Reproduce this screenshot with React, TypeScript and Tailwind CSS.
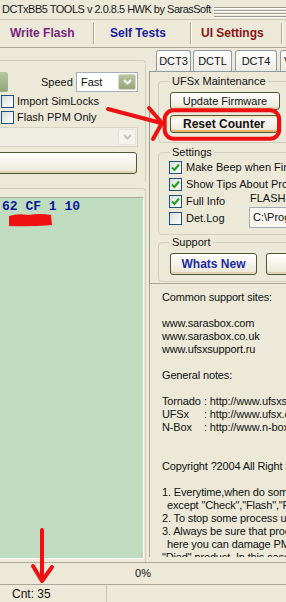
import React from "react";

function Chevron({ color }: { color: string }) {
  return (
    <svg width="9" height="6" viewBox="0 0 9 6">
      <path d="M1 1 L4.5 4.5 L8 1" fill="none" stroke={color} strokeWidth="2" />
    </svg>
  );
}

function DropBtn({ disabled }: { disabled?: boolean }) {
  return (
    <div
      className={
        disabled
          ? "flex h-full w-[18px] shrink-0 items-center justify-center rounded-[2px] border border-[#e6e4da] bg-[#f4f3ee]"
          : "flex h-full w-[18px] shrink-0 items-center justify-center rounded-[2px] border border-[#d2dbc3] bg-gradient-to-b from-[#b9c7a1] to-[#94a677]"
      }
    >
      <Chevron color={disabled ? "#c8c6bb" : "#ffffff"} />
    </div>
  );
}

function Check({ checked }: { checked?: boolean }) {
  return (
    <span className="flex h-[13px] w-[13px] shrink-0 items-center justify-center border border-[#1c5180] bg-gradient-to-br from-[#dcdcd7] to-white">
      {checked && (
        <svg width="9" height="9" viewBox="0 0 9 9">
          <path d="M1 4.5 L3.5 7 L8 1.5" fill="none" stroke="#21a121" strokeWidth="2" />
        </svg>
      )}
    </span>
  );
}

function Sep() {
  return <div className="my-[3px] w-[2px] border-l border-r border-l-[#aca899] border-r-white" />;
}

const btn =
  "flex items-center rounded-[3px] border border-[#4d5b38] bg-gradient-to-b from-white to-[#ebe8d6] shadow-[inset_0_-2px_0_#dcd2b4]";

const memo: React.ReactNode[] = [
  "Common support sites:",
  "",
  "www.sarasbox.com",
  "www.sarasbox.co.uk",
  "www.ufsxsupport.ru",
  "",
  "General notes:",
  "",
  <>
    <span className="inline-block w-[42px]">Tornado</span>: http://www.ufsxsupport.com
  </>,
  <>
    <span className="inline-block w-[42px]">UFSx</span>: http://www.ufsx.com
  </>,
  <>
    <span className="inline-block w-[42px]">N-Box</span>: http://www.n-box.info
  </>,
  "",
  "",
  "Copyright ?2004 All Right Reserved",
  "",
  "1. Everytime,when do some operation,",
  <span className="pl-[5px]">except "Check","Flash","Read"</span>,
  "2. To stop some process use Stop",
  "3. Always be sure that process is done,",
  <span className="pl-[5px]">here you can damage PM</span>,
  "\"Died\" product. In this case",
];

export default function App() {
  return (
    <div className="relative h-[602px] w-[286px] overflow-hidden bg-[#ECE9D8] font-['Liberation_Sans',Arial,sans-serif] text-[11px] leading-[13px] text-[#111]">
      {/* title */}
      <div className="flex h-[20px] items-center border-b border-[#c9c6b4]">
        <span className="shrink-0 whitespace-nowrap pl-[2px] tracking-[-0.5px] text-[#1a1a1a]">
          DCTxBB5 TOOLS v 2.0.8.5 HWK by SarasSoft
        </span>
        <div className="ml-[3px] flex flex-1 flex-col gap-[2px] pt-[4px]">
          <div className="h-px bg-[#9d9a8a] shadow-[0_1px_0_#fff]" />
          <div className="h-px bg-[#9d9a8a] shadow-[0_1px_0_#fff]" />
          <div className="h-px bg-[#9d9a8a] shadow-[0_1px_0_#fff]" />
          <div className="h-px bg-[#9d9a8a] shadow-[0_1px_0_#fff]" />
        </div>
      </div>

      {/* toolbar */}
      <div className="flex h-[28px] items-stretch border-b border-[#aca899] text-[12px] font-bold">
        <div className="flex w-[93px] items-center pl-[10px] text-[#7a1f7f]">Write Flash</div>
        <Sep />
        <div className="flex w-[95px] items-center pl-[15px] text-[#1b1ba0]">Self Tests</div>
        <Sep />
        <div className="flex w-[89px] items-center pl-[9px] text-[#8b1414]">UI Settings</div>
        <Sep />
      </div>

      {/* main */}
      <div className="flex h-[514px]">
        {/* left column */}
        <div className="flex w-[149px] shrink-0 flex-col">
          <div className="mr-[3px] mt-[12px] rounded-tr-[4px] border-r border-t border-[#d0d0bf] pb-[8px] pt-[11px]">
            <div className="flex h-[20px] items-stretch">
              <div className="w-[8px] overflow-hidden rounded-r-[2px] bg-gradient-to-b from-[#b9c7a1] to-[#94a677]" />
              <span className="ml-[33px] w-[32px] self-center">Speed</span>
              <div className="ml-[3px] flex w-[62px] items-stretch border border-[#a5acb5] bg-white p-px">
                <span className="flex-1 self-center pl-[3px]">Fast</span>
                <DropBtn />
              </div>
            </div>
            <div className="mt-px flex h-[16px] items-center gap-[3px] pl-[1px]">
              <Check />
              <span>Import SimLocks</span>
            </div>
            <div className="flex h-[16px] items-center gap-[3px] pl-[1px]">
              <Check />
              <span>Flash PPM Only</span>
            </div>
            <div className="-ml-[4px] mt-[2px] flex h-[20px] w-[142px] justify-end border border-[#d6d3c5] bg-[#efede4] p-px">
              <DropBtn disabled />
            </div>
            <div className={`${btn} -ml-[4px] mt-[5px] h-[22px] w-[141px]`} />
          </div>

          <div className="mr-[3px] mt-[6px] flex flex-1 flex-col rounded-tr-[4px] border-r border-t border-[#d0d0bf] pb-[3px] pt-[8px]">
            <div className="mr-px flex-1 border-b border-r border-t border-b-white border-r-white border-t-[#aca899] bg-[#c0dcc0] pl-[2px] pt-px font-['Liberation_Mono',monospace] text-[13px] font-bold leading-[16px] text-[#0a1aa0]">
              62 CF 1 10
            </div>
          </div>
        </div>

        {/* right column */}
        <div className="flex min-w-0 flex-1 flex-col">
          <div className="mt-[2px] flex h-[21px] items-end pl-[7px]">
            <div className="flex h-[21px] w-[35px] shrink-0 items-center justify-center rounded-t-[3px] border border-b-0 border-[#919b9c] bg-gradient-to-b from-white to-[#ecebe6]">DCT3</div>
            <div className="ml-[2px] flex h-[21px] w-[39px] shrink-0 items-center justify-center rounded-t-[3px] border border-b-0 border-[#919b9c] bg-gradient-to-b from-white to-[#ecebe6]">DCTL</div>
            <div className="ml-[3px] flex h-[21px] w-[42px] shrink-0 items-center justify-center rounded-t-[3px] border border-b-0 border-[#919b9c] bg-gradient-to-b from-white to-[#ecebe6]">DCT4</div>
            <div className="ml-[3px] flex h-[21px] w-[40px] shrink-0 items-center rounded-t-[3px] border border-b-0 border-[#919b9c] bg-gradient-to-b from-white to-[#ecebe6] pl-[3px]">VERS</div>
          </div>

          <div className="h-[212px] shrink-0 border-l border-t border-[#919b9c] pl-[8px] pt-[3px]">
            <fieldset className="w-[150px] rounded-[4px] border border-[#d0d0bf] pb-[9px]">
              <legend className="ml-[11px] px-[2px]">UFSx Maintenance</legend>
              <div className={`${btn} ml-[11px] mt-[4px] h-[18px] w-[110px] justify-center`}>Update Firmware</div>
              <div className={`${btn} ml-[11px] mt-[5px] h-[18px] w-[108px] justify-center border-[#3d4a2a] text-[12px] font-bold shadow-[inset_0_-2px_0_#e8b26a,inset_0_2px_0_#fbe7c1]`}>
                Reset Counter
              </div>
            </fieldset>

            <fieldset className="mt-[3px] w-[150px] rounded-[4px] border border-[#d0d0bf] pb-[6px]">
              <legend className="ml-[11px] px-[2px]">Settings</legend>
              <div className="flex h-[17px] items-center gap-[4px] whitespace-nowrap pl-[10px]">
                <Check checked />
                Make Beep when Finished
              </div>
              <div className="flex h-[17px] items-center gap-[4px] whitespace-nowrap pl-[10px]">
                <Check checked />
                Show Tips About Process
              </div>
              <div className="flex">
                <div className="w-[90px] shrink-0">
                  <div className="flex h-[17px] items-center gap-[4px] pl-[10px]">
                    <Check checked />
                    Full Info
                  </div>
                  <div className="flex h-[17px] items-center gap-[4px] pl-[10px]">
                    <Check />
                    Det.Log
                  </div>
                </div>
                <div className="flex flex-col">
                  <span className="-mt-px pl-px">FLASH</span>
                  <div className="mt-[2px] flex h-[21px] w-[60px] items-center whitespace-nowrap border border-[#a5acb5] bg-[#f7f6f0] pl-[3px]">
                    C:\Program
                  </div>
                </div>
              </div>
            </fieldset>

            <fieldset className="mt-px flex w-[150px] rounded-[4px] border border-[#d0d0bf] pb-[6px]">
              <legend className="ml-[11px] px-[2px]">Support</legend>
              <div className="mt-[4px] flex">
                <div className={`${btn} ml-[11px] h-[22px] w-[87px] justify-center text-[12px] font-bold text-[#1c2aa8]`}>Whats New</div>
                <div className={`${btn} ml-[9px] h-[22px] w-[80px] justify-center text-[12px] font-bold text-[#1c2aa8]`}>Forum</div>
              </div>
            </fieldset>
          </div>

          <div className="h-[274px] shrink-0 overflow-hidden whitespace-pre border-l border-t border-[#aca899] pl-[12px] pt-[7px] tracking-[-0.15px]">
            {memo.map((line, i) => (
              <div key={i} className="h-[13px]">
                {line}
              </div>
            ))}
          </div>
        </div>
      </div>

      {/* progress */}
      <div className="h-[22px] border-t border-[#aca899]">
        <div className="w-[151px] pt-[4px] text-right">0%</div>
      </div>

      {/* status bar */}
      <div className="flex h-[18px] border-t border-[#aca899]">
        <div className="w-[107px] border-r border-[#c9c6b4] pl-[12px] pt-[3px] text-[12px]">Cnt: 35</div>
      </div>

      {/* red annotations */}
      <svg className="pointer-events-none absolute left-0 top-0" width="286" height="602">
        <rect x="164.7" y="110.3" width="114.5" height="28.5" rx="9" fill="none" stroke="#ee1111" strokeWidth="4" />
        <path d="M108 109 L161 123" stroke="#ee1111" strokeWidth="4" strokeLinecap="round" />
        <path d="M149 108 L162 123 L153 139" fill="none" stroke="#ee1111" strokeWidth="4" strokeLinecap="round" strokeLinejoin="round" />
        <path d="M9 216 Q18 213 28 215 Q40 213 51 215 L52 225 Q30 227 9 226 Z" fill="#ee1111" />
        <path d="M42 530 L42 579" stroke="#ee1111" strokeWidth="4" strokeLinecap="round" />
        <path d="M33 566 L42 581 L52 567" fill="none" stroke="#ee1111" strokeWidth="4" strokeLinecap="round" strokeLinejoin="round" />
      </svg>
    </div>
  );
}
